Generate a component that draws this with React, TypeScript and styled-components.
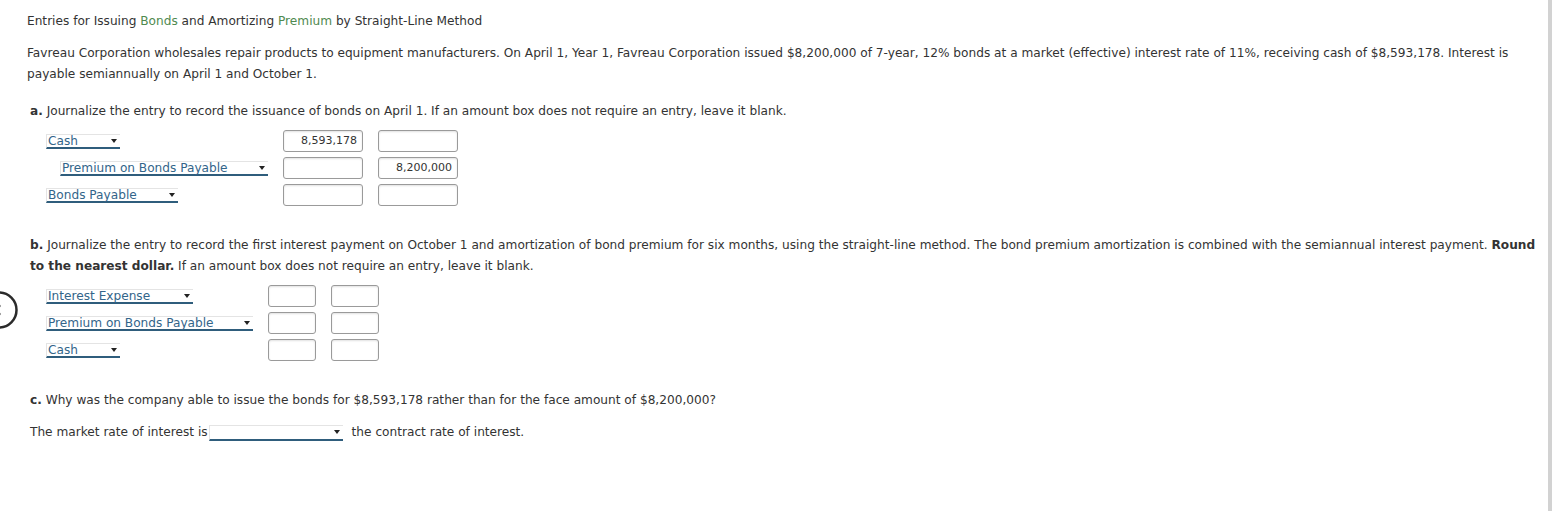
import styled, { createGlobalStyle } from 'styled-components';

const GlobalStyle = createGlobalStyle`
  html, body {
    margin: 0;
    padding: 0;
    background: #fff;
  }
  body {
    font-family: Verdana, "DejaVu Sans", sans-serif;
    font-size: 12.15px;
    color: #333;
  }
`;

type Entry = { account: string; indent?: boolean; width: number; debit?: string; credit?: string };

const partA: Entry[] = [
    {account: 'Cash', width: 74, debit: '8,593,178'},
    {account: 'Premium on Bonds Payable', indent: true, width: 208, credit: '8,200,000'},
    {account: 'Bonds Payable', width: 132},
];

const partB: Entry[] = [
    {account: 'Interest Expense', width: 147},
    {account: 'Premium on Bonds Payable', width: 209},
    {account: 'Cash', width: 74},
];

function Journal({entries, accountCol, boxWidth}: { entries: Entry[]; accountCol: number; boxWidth: number }) {
    return (
        <JournalGrid $accountCol={accountCol} $boxWidth={boxWidth}>
            {entries.map((e) => (
                <Row key={e.account}>
                    <AccountCell $indent={e.indent}>
                        <Dropdown $width={e.width}>
                            <span>{e.account}</span>
                            <Caret/>
                        </Dropdown>
                    </AccountCell>
                    <Amount>{e.debit}</Amount>
                    <Amount>{e.credit}</Amount>
                </Row>
            ))}
        </JournalGrid>
    );
}

function App() {
    return (
        <Frame>
            <GlobalStyle/>
            <NavCircle width="40" height="40" viewBox="0 0 40 40">
                <circle cx="20" cy="20" r="17.5" fill="none" stroke="#2b2b2b" strokeWidth="2.5"/>
                <circle cx="20.5" cy="16" r="1.2" fill="#555"/>
                <circle cx="20.5" cy="24" r="1.2" fill="#555"/>
            </NavCircle>
            <Title>
                Entries for Issuing <Link>Bonds</Link> and Amortizing <Link>Premium</Link> by Straight-Line Method
            </Title>
            <Intro>
                Favreau Corporation wholesales repair products to equipment manufacturers. On April 1, Year 1, Favreau
                Corporation issued $8,200,000 of 7-year, 12% bonds at a market (effective) interest rate of 11%,
                receiving cash of $8,593,178. Interest is payable semiannually on April 1 and October 1.
            </Intro>

            <Question>
                <b>a.</b> Journalize the entry to record the issuance of bonds on April 1. If an amount box does not
                require an entry, leave it blank.
            </Question>
            <Journal entries={partA} accountCol={222} boxWidth={80}/>

            <QuestionB>
                <b>b.</b> Journalize the entry to record the first interest payment on October 1 and amortization of
                bond premium for six months, using the straight-line method. The bond premium amortization is combined
                with the semiannual interest payment. <b>Round to the nearest dollar.</b> If an amount box does not
                require an entry, leave it blank.
            </QuestionB>
            <Journal entries={partB} accountCol={207} boxWidth={48}/>

            <QuestionC>
                <b>c.</b> Why was the company able to issue the bonds for $8,593,178 rather than for the face amount of
                $8,200,000?
            </QuestionC>
            <Answer>
                The market rate of interest is
                <InlineSelect>
                    <Caret/>
                </InlineSelect>
                the contract rate of interest.
            </Answer>
        </Frame>
    );
}

export default App;

const Frame = styled.div`
  position: relative;
  box-sizing: border-box;
  width: 1552px;
  height: 511px;
  padding: 11px 8px 0 27px;
  border-right: 4px solid #d2d2d2;
  overflow: hidden;
`;

const NavCircle = styled.svg`
  position: absolute;
  left: -21px;
  top: 290px;
`;

const Title = styled.div`
  line-height: 21px;
`;

const Link = styled.span`
  color: #4f8a4f;
`;

const Intro = styled.p`
  margin: 11px 0 0;
  line-height: 21px;
`;

const Question = styled.p`
  margin: 16px 0 0 3px;
  line-height: 21px;

  b {
    font-weight: bold;
  }
`;

const QuestionB = styled(Question)`
  margin-top: 29px;
`;

const QuestionC = styled(Question)`
  margin-top: 29px;
`;

const JournalGrid = styled.div<{ $accountCol: number; $boxWidth: number }>`
  display: grid;
  grid-template-columns: ${p => p.$accountCol}px ${p => p.$boxWidth}px ${p => p.$boxWidth}px;
  column-gap: 15px;
  row-gap: 5px;
  margin: 8px 0 0 19px;
`;

const Row = styled.div`
  display: contents;
`;

const AccountCell = styled.div<{ $indent?: boolean }>`
  display: flex;
  align-items: center;
  padding-left: ${p => (p.$indent ? '14px' : '0')};
`;

const Dropdown = styled.div<{ $width: number }>`
  position: relative;
  box-sizing: border-box;
  width: ${p => p.$width}px;
  height: 15px;
  padding: 0 12px 0 1px;
  border-top: 1px solid #e4e4e4;
  border-left: 1px solid #e4e4e4;
  border-bottom: 2px solid #2f5d7c;
  color: #33658a;
  font-size: 12.15px;
  line-height: 12px;
  white-space: nowrap;
`;

const Caret = styled.i`
  position: absolute;
  right: 3px;
  top: 4px;
  width: 0;
  height: 0;
  border-left: 3.5px solid transparent;
  border-right: 3.5px solid transparent;
  border-top: 4px solid #222;
`;

const Amount = styled.div`
  box-sizing: border-box;
  height: 22px;
  padding: 0 5px;
  border: 1px solid #9a9a9a;
  border-radius: 3px;
  box-shadow: inset 0 1px 2px rgba(0, 0, 0, 0.12);
  font-size: 11px;
  line-height: 20px;
  text-align: right;
  color: #333;
`;

const Answer = styled.div`
  display: flex;
  align-items: center;
  margin: 11px 0 0 3px;
  line-height: 21px;
`;

const InlineSelect = styled.span`
  position: relative;
  display: inline-block;
  box-sizing: border-box;
  width: 134px;
  height: 16px;
  margin: 0 9px 0 1px;
  border-top: 1px solid #e4e4e4;
  border-left: 1px solid #e4e4e4;
  border-bottom: 2px solid #2f5d7c;
`;
